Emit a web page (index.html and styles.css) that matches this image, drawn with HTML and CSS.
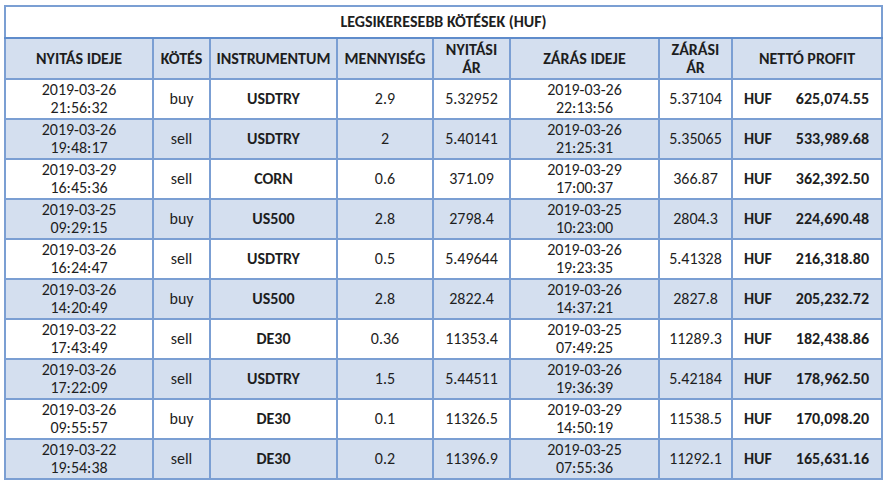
FILE: index.html
```html
<!DOCTYPE html>
<html lang="hu">
<head>
<meta charset="utf-8">
<link rel="stylesheet" href="styles.css">
</head>
<body>
<table class="trades">
<colgroup>
<col class="c1"><col class="c2"><col class="c3"><col class="c4"><col class="c5"><col class="c6"><col class="c7"><col class="c8">
</colgroup>
<thead>
<tr class="title"><th colspan="8">LEGSIKERESEBB KÖTÉSEK (HUF)</th></tr>
<tr class="head">
<th>NYITÁS IDEJE</th><th>KÖTÉS</th><th>INSTRUMENTUM</th><th>MENNYISÉG</th><th>NYITÁSI<br>ÁR</th><th>ZÁRÁS IDEJE</th><th>ZÁRÁSI<br>ÁR</th><th>NETTÓ PROFIT</th>
</tr>
</thead>
<tbody>
<tr><td>2019-03-26<br>21:56:32</td><td>buy</td><td class="b">USDTRY</td><td>2.9</td><td>5.32952</td><td>2019-03-26<br>22:13:56</td><td>5.37104</td><td class="p"><span>HUF</span><span>625,074.55</span></td></tr>
<tr><td>2019-03-26<br>19:48:17</td><td>sell</td><td class="b">USDTRY</td><td>2</td><td>5.40141</td><td>2019-03-26<br>21:25:31</td><td>5.35065</td><td class="p"><span>HUF</span><span>533,989.68</span></td></tr>
<tr><td>2019-03-29<br>16:45:36</td><td>sell</td><td class="b">CORN</td><td>0.6</td><td>371.09</td><td>2019-03-29<br>17:00:37</td><td>366.87</td><td class="p"><span>HUF</span><span>362,392.50</span></td></tr>
<tr><td>2019-03-25<br>09:29:15</td><td>buy</td><td class="b">US500</td><td>2.8</td><td>2798.4</td><td>2019-03-25<br>10:23:00</td><td>2804.3</td><td class="p"><span>HUF</span><span>224,690.48</span></td></tr>
<tr><td>2019-03-26<br>16:24:47</td><td>sell</td><td class="b">USDTRY</td><td>0.5</td><td>5.49644</td><td>2019-03-26<br>19:23:35</td><td>5.41328</td><td class="p"><span>HUF</span><span>216,318.80</span></td></tr>
<tr><td>2019-03-26<br>14:20:49</td><td>buy</td><td class="b">US500</td><td>2.8</td><td>2822.4</td><td>2019-03-26<br>14:37:21</td><td>2827.8</td><td class="p"><span>HUF</span><span>205,232.72</span></td></tr>
<tr><td>2019-03-22<br>17:43:49</td><td>sell</td><td class="b">DE30</td><td>0.36</td><td>11353.4</td><td>2019-03-25<br>07:49:25</td><td>11289.3</td><td class="p"><span>HUF</span><span>182,438.86</span></td></tr>
<tr><td>2019-03-26<br>17:22:09</td><td>sell</td><td class="b">USDTRY</td><td>1.5</td><td>5.44511</td><td>2019-03-26<br>19:36:39</td><td>5.42184</td><td class="p"><span>HUF</span><span>178,962.50</span></td></tr>
<tr><td>2019-03-26<br>09:55:57</td><td>buy</td><td class="b">DE30</td><td>0.1</td><td>11326.5</td><td>2019-03-29<br>14:50:19</td><td>11538.5</td><td class="p"><span>HUF</span><span>170,098.20</span></td></tr>
<tr><td>2019-03-22<br>19:54:38</td><td>sell</td><td class="b">DE30</td><td>0.2</td><td>11396.9</td><td>2019-03-25<br>07:55:36</td><td>11292.1</td><td class="p"><span>HUF</span><span>165,631.16</span></td></tr>
</tbody>
</table>
</body>
</html>
```
FILE: styles.css
```css
html, body {
  margin: 0;
  padding: 0;
  background: #ffffff;
}
body {
  padding: 5px 0 0 4px;
  font-family: Carlito, "Open Sans", "Liberation Sans", sans-serif;
  color: #1e1e1e;
}
.trades {
  border-collapse: collapse;
  table-layout: fixed;
  width: 877px;
  border: 2px solid #6f96cf;
  font-size: 16px;
  line-height: 18px;
}
.c1 { width: 148px; }
.c2 { width: 57px; }
.c3 { width: 127px; }
.c4 { width: 96px; }
.c5 { width: 77px; }
.c6 { width: 149px; }
.c7 { width: 73px; }
.c8 { width: 150px; }
.trades th, .trades td {
  border: 2px solid #7b9fd3;
  text-align: center;
  vertical-align: middle;
  padding: 0;
}
.title th {
  height: 30px;
  background: #ffffff;
  font-weight: bold;
  border-bottom: 2px solid #5f8ccb;
}
.head th {
  height: 39px;
  background: #d4dfef;
  font-weight: bold;
}
.trades tbody td {
  height: 38px;
}
.trades tbody tr:nth-child(even) td {
  background: #d4dfef;
}
.b { font-weight: bold; }
.p {
  font-weight: bold;
}
.p span {
  display: inline-block;
}
.trades td.p {
  text-align: left;
  padding: 0 12px 0 11px;
}
.p span:last-child {
  float: right;
}
```
